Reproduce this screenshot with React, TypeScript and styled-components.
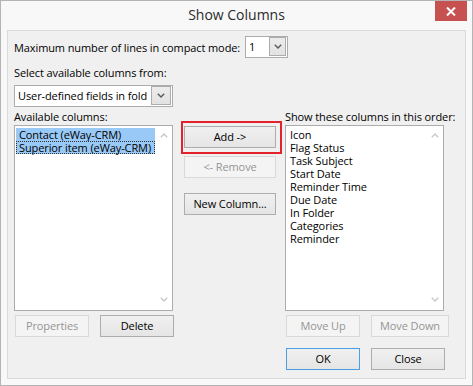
import React from "react";
import styled, { createGlobalStyle, css } from "styled-components";

const GlobalStyle = createGlobalStyle`
  html, body { margin: 0; padding: 0; background: #ffffff; }
  body { font-family: "Open Sans", "Noto Sans", sans-serif; }
  * { box-sizing: border-box; }
`;

const Window = styled.div`
  width: 473px;
  height: 386px;
  border: 1px solid #b4b4b4;
  background: #f8f8f8;
  display: flex;
  flex-direction: column;
`;

const TitleBar = styled.div`
  height: 29px;
  display: grid;
  grid-template-columns: 1fr auto 1fr;
  align-items: start;
`;

const Title = styled.div`
  font-size: 14px;
  line-height: 28px;
  color: #2b2b2b;
`;

const CloseButton = styled.div`
  justify-self: end;
  width: 32px;
  height: 20px;
  margin-right: 5px;
  background: #c75050;
  display: flex;
  align-items: center;
  justify-content: center;
`;

const Client = styled.div`
  margin: 0 6px;
  height: 349px;
  border: 1px solid #dadada;
  background: #f0f0f0;
  padding: 5px 6px 0 6px;
  display: flex;
  flex-direction: column;
  font-size: 11px;
  letter-spacing: -0.1px;
  color: #000;
`;

const TopRow = styled.div`
  display: grid;
  grid-template-columns: 231px 43px;
  align-items: center;
`;

const Label = styled.div<{ $mt?: number }>`
  line-height: 15px;
  height: 15px;
  white-space: nowrap;
  margin-top: ${(p) => p.$mt ?? 0}px;
`;

const Combo = styled.div<{ $w: number; $mt?: number }>`
  width: ${(p) => p.$w}px;
  height: 22px;
  margin-top: ${(p) => p.$mt ?? 0}px;
  border: 1px solid #acacac;
  background: #fff;
  display: flex;
  align-items: stretch;
  padding: 0 1px 1px 0;
`;

const ComboText = styled.div`
  flex: 1;
  overflow: hidden;
  white-space: nowrap;
  padding-left: 3px;
  line-height: 19px;
`;

const ComboArrow = styled.div<{ $w: number }>`
  width: ${(p) => p.$w}px;
  flex: none;
  border: 1px solid #acacac;
  background: linear-gradient(#ececec, #e2e2e2);
  display: flex;
  align-items: center;
  justify-content: center;
`;

const Columns = styled.div`
  display: flex;
  margin-top: 2px;
`;

const Column = styled.div<{ $w: number }>`
  width: ${(p) => p.$w}px;
  display: flex;
  flex-direction: column;
`;

const Middle = styled.div`
  width: 92px;
  margin: 17px 9px 0 11px;
  display: flex;
  flex-direction: column;
`;

const ListBox = styled.div`
  width: 159px;
  height: 186px;
  margin-top: 1px;
  border: 1px solid #acacac;
  background: #fff;
  display: flex;
  padding: 2px 0 1px 1px;
`;

const ListItems = styled.div`
  flex: 1;
  display: flex;
  flex-direction: column;
`;

const Item = styled.div<{ $selected?: boolean; $focus?: boolean }>`
  height: 13px;
  line-height: 13px;
  padding-left: 3px;
  white-space: nowrap;
  ${(p) =>
    p.$selected &&
    css`
      background: #99c9f6;
    `}
  ${(p) =>
    p.$focus &&
    css`
      outline: 1px dotted #303030;
      outline-offset: -1px;
    `}
`;

const Scroll = styled.div`
  width: 17px;
  flex: none;
  display: flex;
  flex-direction: column;
  justify-content: space-between;
  align-items: center;
  padding: 5px 0 7px 0;
`;

const ButtonBase = styled.div<{ $w: number; $disabled?: boolean; $default?: boolean }>`
  width: ${(p) => p.$w}px;
  height: 22px;
  flex: none;
  border: 1px solid #adadad;
  background: linear-gradient(#f0f0f0, #e5e5e5);
  display: flex;
  align-items: center;
  justify-content: center;
  line-height: 20px;
  color: #000;
  white-space: nowrap;
  ${(p) =>
    p.$disabled &&
    css`
      border-color: #d9d9d9;
      background: #f4f4f4;
      color: #949494;
    `}
  ${(p) =>
    p.$default &&
    css`
      border-color: #4b9ee6;
    `}
`;

const ButtonRow = styled.div<{ $mt: number; $ml?: number }>`
  display: flex;
  gap: 11px;
  margin-top: ${(p) => p.$mt}px;
  margin-left: ${(p) => p.$ml ?? 0}px;
`;

const Highlighted = styled.div`
  position: relative;
`;

const RedFrame = styled.div`
  position: absolute;
  top: -5px;
  left: -3px;
  right: -6px;
  bottom: -6px;
  border: 2px solid #e3222b;
  pointer-events: none;
`;

const Chevron = ({ up, color = "#5a5a5a" }: { up?: boolean; color?: string }) => (
  <svg width="8" height="5" viewBox="0 0 8 5">
    <path
      d={up ? "M0.8 4.2 L4 1 L7.2 4.2" : "M0.8 0.8 L4 4 L7.2 0.8"}
      fill="none"
      stroke={color}
      strokeWidth="1.4"
    />
  </svg>
);

const CloseGlyph = () => (
  <svg width="10" height="9" viewBox="0 0 10 9">
    <path d="M1 0.5 L9 8.5 M9 0.5 L1 8.5" stroke="#fff" strokeWidth="2" />
  </svg>
);

const rightItems = [
  "Icon",
  "Flag Status",
  "Task Subject",
  "Start Date",
  "Reminder Time",
  "Due Date",
  "In Folder",
  "Categories",
  "Reminder",
];

export default function App() {
  return (
    <>
      <GlobalStyle />
      <Window>
        <TitleBar>
          <span />
          <Title>Show Columns</Title>
          <CloseButton>
            <CloseGlyph />
          </CloseButton>
        </TitleBar>
        <Client>
          <TopRow>
            <Label>Maximum number of lines in compact mode:</Label>
            <Combo $w={43}>
              <ComboText>1</ComboText>
              <ComboArrow $w={17}>
                <Chevron />
              </ComboArrow>
            </Combo>
          </TopRow>
          <Label $mt={7}>Select available columns from:</Label>
          <Combo $w={159} $mt={5}>
            <ComboText>User-defined fields in fold</ComboText>
            <ComboArrow $w={20}>
              <Chevron />
            </ComboArrow>
          </Combo>
          <Columns>
            <Column $w={159}>
              <Label>Available columns:</Label>
              <ListBox>
                <ListItems>
                  <Item $selected>Contact (eWay-CRM)</Item>
                  <Item $selected $focus>
                    Superior item (eWay-CRM)
                  </Item>
                </ListItems>
                <Scroll>
                  <Chevron up color="#c8c8c8" />
                  <Chevron color="#c8c8c8" />
                </Scroll>
              </ListBox>
              <ButtonRow $mt={4} $ml={1}>
                <ButtonBase $w={74} $disabled>
                  Properties
                </ButtonBase>
                <ButtonBase $w={74}>Delete</ButtonBase>
              </ButtonRow>
            </Column>
            <Middle>
              <Highlighted>
                <ButtonBase $w={92}>Add -&gt;</ButtonBase>
                <RedFrame />
              </Highlighted>
              <ButtonRow $mt={8}>
                <ButtonBase $w={92} $disabled>
                  &lt;- Remove
                </ButtonBase>
              </ButtonRow>
              <ButtonRow $mt={15}>
                <ButtonBase $w={92}>New Column...</ButtonBase>
              </ButtonRow>
            </Middle>
            <Column $w={164}>
              <Label>Show these columns in this order:</Label>
              <ListBox>
                <ListItems>
                  {rightItems.map((t) => (
                    <Item key={t}>{t}</Item>
                  ))}
                </ListItems>
                <Scroll>
                  <Chevron up color="#c8c8c8" />
                  <Chevron color="#c8c8c8" />
                </Scroll>
              </ListBox>
              <ButtonRow $mt={4} $ml={1}>
                <ButtonBase $w={74} $disabled>
                  Move Up
                </ButtonBase>
                <ButtonBase $w={78} $disabled>
                  Move Down
                </ButtonBase>
              </ButtonRow>
              <ButtonRow $mt={11} $ml={1}>
                <ButtonBase $w={74} $default>
                  OK
                </ButtonBase>
                <ButtonBase $w={74}>Close</ButtonBase>
              </ButtonRow>
            </Column>
          </Columns>
        </Client>
      </Window>
    </>
  );
}
